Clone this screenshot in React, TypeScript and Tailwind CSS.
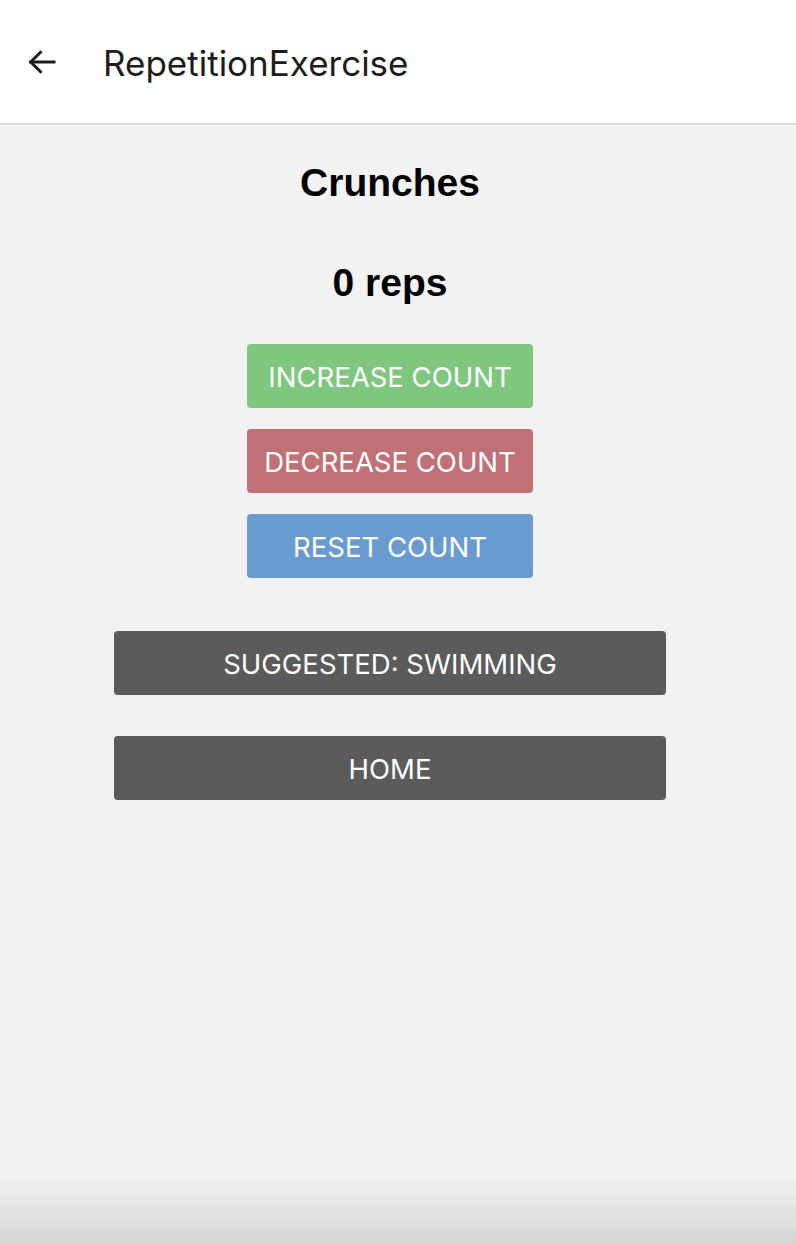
import React, { useState } from 'react';

const sans = { fontFamily: 'Inter, Roboto, "Liberation Sans", sans-serif' };
const bold = { fontFamily: '"Liberation Sans", Arial, sans-serif' };

export default function App() {
  const [count, setCount] = useState(0);

  return (
    <div className="relative flex h-[1244px] w-[796px] flex-col overflow-hidden bg-[#f2f2f2]" style={sans}>
      {/* Header */}
      <div className="flex h-[125px] shrink-0 items-center border-b-2 border-[#d9d9d9] bg-white">
        <button className="ml-[24px] flex h-[36px] w-[36px] items-center justify-center text-[#1c1c1c]">
          <svg width="36" height="36" viewBox="0 0 24 24" fill="none" stroke="currentColor" strokeWidth="2" strokeLinecap="square">
            <path d="M20 12H4.5" />
            <path d="M11 5.5L4.5 12l6.5 6.5" />
          </svg>
        </button>
        <h1 className="mt-[3px] ml-[43px] text-[35px] font-normal text-[#1c1c1c]">RepetitionExercise</h1>
      </div>

      {/* Body */}
      <div className="flex flex-col items-center pt-[34px] pr-[16px]">
        <h2 className="text-[39px] leading-[48px] font-bold text-black" style={bold}>Crunches</h2>
        <p className="mt-[52px] text-[39px] leading-[48px] font-bold text-black" style={bold}>{count} reps</p>

        <div className="mt-[37px] flex flex-col gap-[21px]">
          <button
            onClick={() => setCount(c => c + 1)}
            className="h-[64px] w-[286px] rounded-[4px] bg-[#7fc67f] pt-[3px] text-[27.5px] text-white"
          >
            INCREASE COUNT
          </button>
          <button
            onClick={() => setCount(c => Math.max(0, c - 1))}
            className="h-[64px] w-[286px] rounded-[4px] bg-[#c07177] pt-[3px] text-[27.5px] text-white"
          >
            DECREASE COUNT
          </button>
          <button
            onClick={() => setCount(0)}
            className="h-[64px] w-[286px] rounded-[4px] bg-[#6a9bd0] pt-[3px] text-[27.5px] text-white"
          >
            RESET COUNT
          </button>
        </div>

        <div className="mt-[53px] flex flex-col gap-[41px]">
          <button className="h-[64px] w-[552px] rounded-[4px] bg-[#5b5b5b] pt-[3px] text-[27.5px] text-white">
            SUGGESTED: SWIMMING
          </button>
          <button className="h-[64px] w-[552px] rounded-[4px] bg-[#5b5b5b] pt-[3px] text-[27.5px] text-white">
            HOME
          </button>
        </div>
      </div>

      {/* bottom shade */}
      <div className="pointer-events-none absolute bottom-0 left-0 h-[70px] w-full bg-gradient-to-b from-transparent to-[#d5d5d5]" />
    </div>
  );
}
